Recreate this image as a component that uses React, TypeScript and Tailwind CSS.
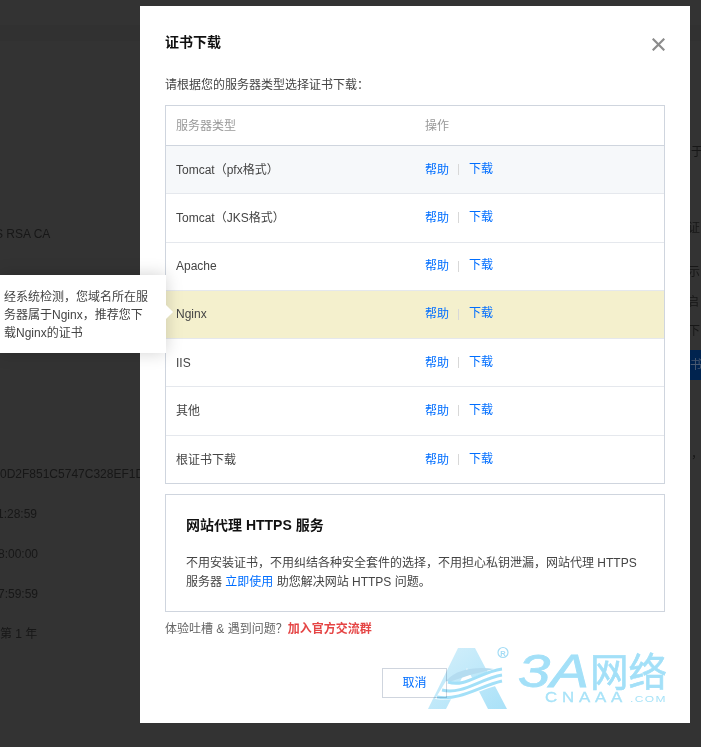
const rows = ['Tomcat（pfx格式）', 'Tomcat（JKS格式）', 'Apache', 'Nginx', 'IIS', '其他', '根证书下载'];

function RowLinks() {
  return (
    <div className="flex items-center text-[#006eff]">
      <a href="#">帮助</a>
      <span className="mr-[10px] ml-[9px] h-[11px] w-px bg-[#d8d8d8]" />
      <a href="#" className="-translate-y-px">下载</a>
    </div>
  );
}

function BackgroundLeft() {
  return (
    <div className="h-[747px] w-[140px] shrink-0 overflow-hidden text-[12px] leading-[16px] whitespace-nowrap text-[#171717]">
      <div className="mt-[25px] h-[16px] bg-[#313131]" />
      <div className="mt-[185px] ml-[-5px]">S RSA CA</div>
      <div className="mt-[224px]">0D2F851C5747C328EF1DA</div>
      <div className="mt-[24px] ml-[-3px]">1:28:59</div>
      <div className="mt-[24px] ml-[-2px]">8:00:00</div>
      <div className="mt-[24px] ml-[-2px]">7:59:59</div>
      <div className="mt-[24px]">第 1 年</div>
    </div>
  );
}

function BackgroundRight() {
  return (
    <div className="h-[747px] min-w-0 flex-1 overflow-hidden text-[12px] leading-[16px] whitespace-nowrap text-[#171717]">
      <div className="mt-[25px] h-[16px] bg-[#313131]" />
      <div className="mt-[103px] ml-[1px]">于</div>
      <div className="mt-[60px] ml-[-2px]">证</div>
      <div className="mt-[28px] ml-[-2px]">示</div>
      <div className="mt-[14px] ml-[-3px]">启</div>
      <div className="mt-[13px] ml-[-2px]">下</div>
      <div className="mt-[11px] h-[30px] bg-[#00234f] pt-[7px] text-[#4a5a70]">书</div>
      <div className="mt-[66px] ml-[1px]">，</div>
    </div>
  );
}

function Watermark() {
  return (
    <svg
      className="pointer-events-none absolute top-[640px] left-[425px] h-[75px] w-[250px] mix-blend-multiply"
      viewBox="425 640 250 75"
      fill="none"
    >
      <defs>
        <linearGradient id="aFill" x1="0" y1="0" x2="1" y2="1">
          <stop offset="0" stopColor="#d6f0fb" />
          <stop offset="1" stopColor="#a9e1f8" />
        </linearGradient>
      </defs>
      <path d="M458 648H475L507 709H488L467 668L446 709H428Z" fill="url(#aFill)" />
      <path d="M447 680C456 669 478 666 494 669L470 675L446 683Z" fill="#b4dcf0" />
      <path d="M446 681C464 687 480 671 503 668V684C480 689 460 703 435 699Z" fill="#ffffff" />
      <path d="M448 682C465 688 480 672 502 669" stroke="#a3e0f8" strokeWidth="3" />
      <path d="M442 690C462 695 480 679 502 675" stroke="#a3e0f8" strokeWidth="3" />
      <path d="M437 697C460 701 480 686 502 681" stroke="#a3e0f8" strokeWidth="3" />
      <circle cx="503" cy="652.500" r="5" stroke="#a3dcf5" strokeWidth="1.200" fill="#ffffff" />
      <text x="503" y="655.500" textAnchor="middle" fontSize="7.500" fontWeight="bold" fill="#a3dcf5" fontFamily="'Liberation Sans', sans-serif">R</text>
      <text x="518" y="687" textLength="71" lengthAdjust="spacingAndGlyphs" fontSize="47" fontStyle="italic" stroke="#a3e0f8" strokeWidth="0.800" fill="#a3e0f8" fontFamily="'Liberation Sans', sans-serif">3A</text>
      <text x="590" y="686" textLength="77" lengthAdjust="spacingAndGlyphs" fontSize="39" stroke="#a3e0f8" strokeWidth="0.600" fill="#a3e0f8" fontFamily="'Noto Sans CJK SC', sans-serif">网络</text>
      <text x="545" y="702" textLength="82" lengthAdjust="spacingAndGlyphs" fontSize="14" letterSpacing="4" stroke="#a8e3f8" strokeWidth="0.300" fill="#a8e3f8" fontFamily="'Liberation Sans', sans-serif">CNAAA</text>
      <text x="630" y="702" textLength="37" lengthAdjust="spacingAndGlyphs" fontSize="8.500" letterSpacing="1" fill="#a8e3f8" fontFamily="'Liberation Sans', sans-serif">.COM</text>
    </svg>
  );
}

export default function App() {
  return (
    <div className="relative flex h-[747px] w-[701px] overflow-hidden bg-[#333333] font-['Liberation_Sans','Noto_Sans_CJK_SC',sans-serif] text-[12px] text-[#444444]">
      <BackgroundLeft />

      {/* Dialog */}
      <div className="mt-[6px] h-[717px] w-[550px] shrink-0 bg-white px-[25px] pt-[27px]">
        <div className="flex h-[18px] items-center justify-between">
          <h2 className="text-[14px] font-bold text-[#111111]">证书下载</h2>
          <svg className="mt-[5px] h-[13px] w-[13px]" viewBox="0 0 13 13" fill="none" stroke="#8c8c8c" strokeWidth="2.200">
            <path d="M.7.7l11.600 11.600M12.300.7L.7 12.300" />
          </svg>
        </div>

        <p className="mt-[26px] h-[16px] leading-[16px]">请根据您的服务器类型选择证书下载：</p>

        {/* Table */}
        <div className="mt-[12px] h-[379px] overflow-hidden border border-[#cfd5de]">
          <div className="flex h-[40px] items-center border-b border-[#cfd5de] text-[#999999]">
            <div className="w-1/2 pl-[10px]">服务器类型</div>
            <div className="pl-[10px]">操作</div>
          </div>
          {rows.map((name, i) => (
            <div
              key={name}
              className={`flex h-[48.280px] items-center border-b border-[#e5e8ed] last:border-b-0 ${
                i === 0 ? 'bg-[#f6f8fa]' : i === 3 ? 'bg-[#f4f0cd]' : 'bg-white'
              }`}
            >
              <div className="w-1/2 pl-[10px]">{name}</div>
              <div className="pl-[10px]">
                <RowLinks />
              </div>
            </div>
          ))}
        </div>

        {/* HTTPS proxy box */}
        <div className="mt-[10px] h-[118px] border border-[#cfd5de] px-[20px] pt-[21px]">
          <h3 className="text-[14px] leading-[18px] font-bold text-[#111111]">网站代理 HTTPS 服务</h3>
          <p className="mt-[20px] w-[460px] leading-[19px]">
            不用安装证书，不用纠结各种安全套件的选择，不用担心私钥泄漏，网站代理 HTTPS 服务器{' '}
            <a href="#" className="text-[#006eff]">立即使用</a> 助您解决网站 HTTPS 问题。
          </p>
        </div>

        <p className="mt-[9px] h-[16px] leading-[16px] text-[#666666]">
          体验吐槽 &amp; 遇到问题？<a href="#" className="font-bold text-[#e54545]">加入官方交流群</a>
        </p>

        <div className="mt-[31px] flex pl-[217px]">
          <button className="h-[30px] w-[65px] border border-[#cfd5de] bg-white text-[#006eff]">取消</button>
        </div>
      </div>

      <BackgroundRight />

      {/* Tooltip */}
      <div className="absolute top-[275px] left-0 h-[78px] w-[166px] bg-white pt-[13px] pl-[4px] leading-[18px] shadow-[0_0_16px_rgba(0,0,0,0.18)]">
        <div className="w-[146px]">经系统检测，您域名所在服务器属于Nginx，推荐您下载Nginx的证书</div>
        <span className="absolute top-[32px] right-[-5px] h-[10px] w-[10px] rotate-45 bg-white" />
      </div>

      <Watermark />
    </div>
  );
}
